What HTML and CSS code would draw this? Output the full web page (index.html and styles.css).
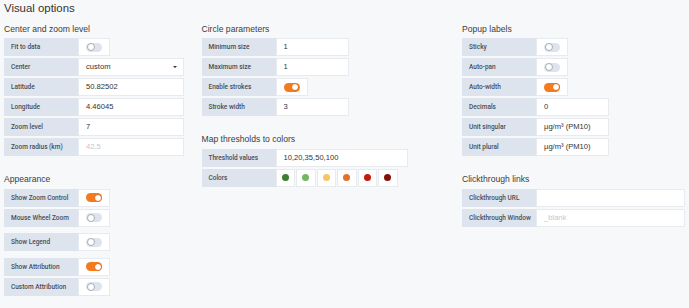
FILE: index.html
```html
<!DOCTYPE html>
<html>
<head>
<meta charset="utf-8">
<link rel="stylesheet" href="styles.css">
</head>
<body>
<div class="page">
  <h3 class="title">Visual options</h3>
  <div class="columns">
    <div class="col col-1">
      <section class="group">
        <h5 class="heading">Center and zoom level</h5>
        <div class="row"><span class="label">Fit to data</span><span class="switch-box"><span class="switch"><span class="knob"></span></span></span></div>
        <div class="row"><span class="label">Center</span><span class="input select w-wide">custom<span class="caret"></span></span></div>
        <div class="row"><span class="label">Latitude</span><span class="input w-wide">50.82502</span></div>
        <div class="row"><span class="label">Longitude</span><span class="input w-wide">4.46045</span></div>
        <div class="row"><span class="label">Zoom level</span><span class="input w-wide">7</span></div>
        <div class="row"><span class="label">Zoom radius (km)</span><span class="input w-wide placeholder">42.5</span></div>
      </section>
      <section class="group">
        <h5 class="heading">Appearance</h5>
        <div class="row"><span class="label">Show Zoom Control</span><span class="switch-box"><span class="switch on"><span class="knob"></span></span></span></div>
        <div class="row"><span class="label">Mouse Wheel Zoom</span><span class="switch-box"><span class="switch"><span class="knob"></span></span></span></div>
        <div class="row spaced"><span class="label">Show Legend</span><span class="switch-box"><span class="switch"><span class="knob"></span></span></span></div>
        <div class="row spaced"><span class="label">Show Attribution</span><span class="switch-box"><span class="switch on"><span class="knob"></span></span></span></div>
        <div class="row"><span class="label">Custom Attribution</span><span class="switch-box"><span class="switch"><span class="knob"></span></span></span></div>
      </section>
    </div>
    <div class="col col-2">
      <section class="group">
        <h5 class="heading">Circle parameters</h5>
        <div class="row"><span class="label">Minimum size</span><span class="input w-small">1</span></div>
        <div class="row"><span class="label">Maximum size</span><span class="input w-small">1</span></div>
        <div class="row"><span class="label">Enable strokes</span><span class="switch-box"><span class="switch on"><span class="knob"></span></span></span></div>
        <div class="row"><span class="label">Stroke width</span><span class="input w-small">3</span></div>
      </section>
      <section class="group">
        <h5 class="heading">Map thresholds to colors</h5>
        <div class="row"><span class="label">Threshold values</span><span class="input w-thresh">10,20,35,50,100</span></div>
        <div class="row"><span class="label">Colors</span>
          <span class="swatches">
            <span class="swatch"><span class="dot c1"></span></span>
            <span class="swatch"><span class="dot c2"></span></span>
            <span class="swatch"><span class="dot c3"></span></span>
            <span class="swatch"><span class="dot c4"></span></span>
            <span class="swatch"><span class="dot c5"></span></span>
            <span class="swatch"><span class="dot c6"></span></span>
          </span>
        </div>
      </section>
    </div>
    <div class="col col-3">
      <section class="group">
        <h5 class="heading">Popup labels</h5>
        <div class="row"><span class="label">Sticky</span><span class="switch-box"><span class="switch"><span class="knob"></span></span></span></div>
        <div class="row"><span class="label">Auto-pan</span><span class="switch-box"><span class="switch"><span class="knob"></span></span></span></div>
        <div class="row"><span class="label">Auto-width</span><span class="switch-box"><span class="switch on"><span class="knob"></span></span></span></div>
        <div class="row"><span class="label">Decimals</span><span class="input w-small">0</span></div>
        <div class="row"><span class="label">Unit singular</span><span class="input w-small">µg/m³ (PM10)</span></div>
        <div class="row"><span class="label">Unit plural</span><span class="input w-small">µg/m³ (PM10)</span></div>
      </section>
      <section class="group">
        <h5 class="heading">Clickthrough links</h5>
        <div class="row"><span class="label">Clickthrough URL</span><span class="input w-link"></span></div>
        <div class="row"><span class="label">Clickthrough Window</span><span class="input w-link placeholder">_blank</span></div>
      </section>
    </div>
  </div>
</div>
</body>
</html>
```

FILE: styles.css
```css
body {
  margin: 0;
  background: #f7f8fa;
  font-family: "Liberation Sans", Arial, sans-serif;
  color: #52545c;
}

.page {
  padding: 1.2px 4px 0;
}

.title {
  margin: 0;
  font-size: 11.4px;
  line-height: 14px;
  font-weight: 400;
  color: #333;
}

.columns {
  display: flex;
  margin-top: 8.8px;
}

.col-1 { width: 197.5px; }
.col-2 { width: 260.5px; }
.col-3 { flex: 1; }

.group {
  margin-bottom: 18px;
}

.heading {
  margin: 0 0 3.5px;
  font-size: 8.6px;
  line-height: 11px;
  font-weight: 400;
  color: #3a3c42;
}

.row {
  display: flex;
  height: 18px;
  margin-bottom: 2px;
}

.row.spaced {
  margin-top: 6.5px;
}

.label {
  flex: none;
  width: 74px;
  box-sizing: border-box;
  padding-left: 7px;
  background: #dde4ed;
  font-family: Roboto, "Liberation Sans", sans-serif;
  font-size: 6.5px;
  font-weight: 500;
  line-height: 18px;
  color: #4a4d55;
  white-space: nowrap;
}

.input {
  flex: none;
  box-sizing: border-box;
  height: 18px;
  background: #fff;
  border: 1px solid #e7ebf0;
  line-height: 16px;
  font-size: 7.6px;
  color: #333;
  padding: 0 7px;
  white-space: nowrap;
}

.input.placeholder {
  color: #c2c9d1;
}

.w-wide { width: 106px; }
.w-small { width: 73px; }
.w-thresh { width: 132px; }
.w-link { width: 149px; }

.select {
  display: flex;
  align-items: center;
  justify-content: space-between;
}

.caret {
  width: 0;
  height: 0;
  border-left: 2px solid transparent;
  border-right: 2px solid transparent;
  border-top: 2.5px solid #333;
  margin-right: -1px;
}

.switch-box {
  flex: none;
  box-sizing: border-box;
  width: 32px;
  height: 18px;
  background: #fff;
  border: 1px solid #e7ebf0;
  display: flex;
  align-items: center;
  justify-content: center;
}

.switch {
  box-sizing: border-box;
  width: 16px;
  height: 9px;
  border-radius: 5px;
  background: #dde4ed;
  display: flex;
  align-items: center;
  justify-content: flex-start;
}

.switch.on {
  background: #f37b1d;
  justify-content: flex-end;
}

.knob {
  box-sizing: border-box;
  width: 8px;
  height: 8px;
  margin: 0 0.5px;
  border-radius: 50%;
  background: #fff;
  border: 1px solid #a6adb6;
}

.switch.on .knob {
  border-color: #e8650e;
}

.swatches {
  display: flex;
  gap: 1px;
}

.swatch {
  box-sizing: border-box;
  width: 19.5px;
  height: 18px;
  background: #fff;
  border: 1px solid #e7ebf0;
  display: flex;
  align-items: center;
  justify-content: center;
}

.dot {
  width: 7px;
  height: 7px;
  border-radius: 50%;
}

.c1 { background: #3d7e30; }
.c2 { background: #74b566; }
.c3 { background: #f4c762; }
.c4 { background: #e2712a; }
.c5 { background: #c4190b; }
.c6 { background: #880e09; }
```
